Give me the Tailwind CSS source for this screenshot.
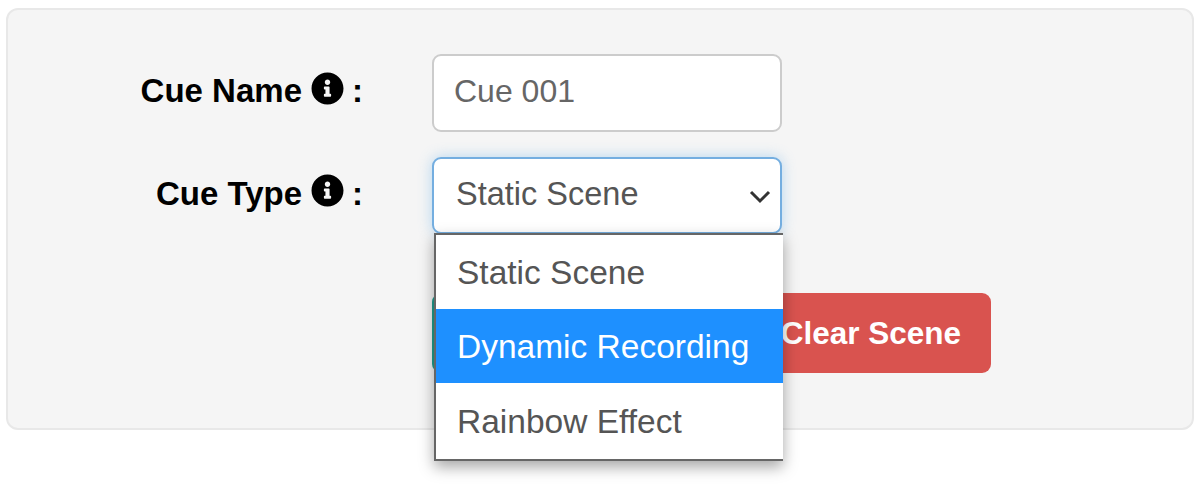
<!DOCTYPE html>
<html lang="en">
<head>
  <meta charset="UTF-8" />
  <title>Cue Editor</title>
  <script src="https://cdn.jsdelivr.net/npm/@tailwindcss/browser@4"></script>
</head>
<body class="min-h-screen bg-white font-['Liberation_Sans',Arial,sans-serif] text-[32px] text-[#555]">

  <div class="mx-[6px] mt-[8px] rounded-[12px] border-2 border-[#e8e8e8] bg-[#f5f5f5] pt-[44px] pb-[55px]">

    <!-- Cue Name -->
    <div class="flex items-start">
      <label class="flex h-[78px] w-[355px] items-center justify-end pb-[4px] text-[33px] font-bold text-black">
        Cue Name
        <svg class="mb-[6px] ml-[9px] h-[33px] w-[33px]" viewBox="0 0 512 512" fill="currentColor"><path d="M256 8C119.043 8 8 119.083 8 256c0 136.997 111.043 248 248 248s248-111.003 248-248C504 119.083 392.957 8 256 8zm0 110c23.196 0 42 18.804 42 42s-18.804 42-42 42-42-18.804-42-42 18.804-42 42-42zm56 254c0 6.627-5.373 12-12 12h-88c-6.627 0-12-5.373-12-12v-24c0-6.627 5.373-12 12-12h12v-64h-12c-6.627 0-12-5.373-12-12v-24c0-6.627 5.373-12 12-12h64c6.627 0 12 5.373 12 12v100h12c6.627 0 12 5.373 12 12v24z"/></svg>
        <span class="ml-[8px]">:</span>
      </label>
      <div class="ml-[69px] flex h-[78px] w-[350px] items-center rounded-[9px] border-2 border-[#ccc] bg-white pl-[20px] pb-[4px] text-[#666]">Cue 001</div>
    </div>

    <!-- Cue Type -->
    <div class="mt-[25px] flex items-start">
      <label class="flex h-[77px] w-[355px] items-center justify-end pb-[4px] text-[33px] font-bold text-black">
        Cue Type
        <svg class="mb-[6px] ml-[9px] h-[33px] w-[33px]" viewBox="0 0 512 512" fill="currentColor"><path d="M256 8C119.043 8 8 119.083 8 256c0 136.997 111.043 248 248 248s248-111.003 248-248C504 119.083 392.957 8 256 8zm0 110c23.196 0 42 18.804 42 42s-18.804 42-42 42-42-18.804-42-42 18.804-42 42-42zm56 254c0 6.627-5.373 12-12 12h-88c-6.627 0-12-5.373-12-12v-24c0-6.627 5.373-12 12-12h12v-64h-12c-6.627 0-12-5.373-12-12v-24c0-6.627 5.373-12 12-12h64c6.627 0 12 5.373 12 12v100h12c6.627 0 12 5.373 12 12v24z"/></svg>
        <span class="ml-[8px]">:</span>
      </label>
      <div class="relative z-10 ml-[69px] w-[350px]">
        <div class="flex h-[77px] items-center justify-between rounded-[9px] border-2 border-[#74aee0] bg-white pl-[22px] pr-[9px] pb-[2px] text-[32.5px] shadow-[0_0_14px_rgba(102,175,233,0.45)]">
          <span>Static Scene</span>
          <svg class="mt-[2px] h-[22px] w-[22px] text-[#333]" viewBox="0 0 22 22" fill="none" stroke="currentColor" stroke-width="3"><path d="M2 7l9 9 9-9"/></svg>
        </div>
        <!-- open dropdown -->
        <ul class="absolute top-[76px] left-[2px] w-[349px] border-2 border-r-0 border-[#666] bg-white text-[33.5px] shadow-[0_6px_14px_rgba(0,0,0,0.35)]">
          <li class="flex h-[74px] items-center pl-[21px] pt-[2px]">Static Scene</li>
          <li class="flex h-[74px] items-center bg-[#1e90ff] pl-[21px] pt-[2px] text-white">Dynamic Recording</li>
          <li class="flex h-[76px] items-center pl-[21px] pt-[2px]">Rainbow Effect</li>
        </ul>
      </div>
    </div>

    <!-- Buttons -->
    <div class="mt-[59px] ml-[424px] flex">
      <div class="h-[80px] w-[320px] rounded-[9px] bg-[#1f9e8f]"></div>
      <button class="ml-[5px] flex h-[80px] w-[234px] items-center justify-end rounded-[9px] bg-[#d9534f] pr-[30px] pt-[2px] text-[31.5px] font-bold text-white">Clear Scene</button>
    </div>
  </div>

</body>
</html>
